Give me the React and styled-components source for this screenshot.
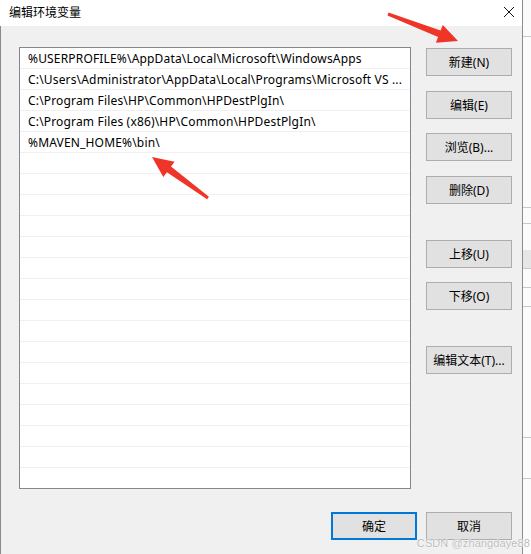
import React from "react";
import styled, { createGlobalStyle } from "styled-components";

const GlobalStyle = createGlobalStyle`
  html, body {
    margin: 0;
    padding: 0;
    background: #f7f7f7;
  }
  body {
    font-family: "Noto Sans", "Noto Sans CJK SC", sans-serif;
    font-size: 12px;
    color: #000;
  }
`;

const Page = styled.div`
  position: relative;
  display: flex;
  width: 531px;
  height: 554px;
  overflow: hidden;
`;

const Window = styled.div`
  display: flex;
  flex-direction: column;
  width: 523px;
  height: 554px;
  border-right: 1px solid #8c8c8c;
  box-sizing: border-box;
`;

const TitleBar = styled.div`
  display: flex;
  align-items: center;
  justify-content: space-between;
  height: 26px;
  box-sizing: border-box;
  padding: 0 7px 2px 9px;
  background: #fff;
  flex-shrink: 0;
`;

const Title = styled.span`
  font-family: "Noto Sans CJK SC", sans-serif;
  font-size: 12px;
  line-height: 1;
`;

const Body = styled.div`
  flex: 1;
  display: flex;
  flex-direction: column;
  padding: 21px 10px 0 18px;
  background: #f0f0f0;
  border-left: 1px solid #8a8a8a;
`;

const Main = styled.div`
  display: flex;
  align-items: flex-start;
`;

const List = styled.div`
  width: 392px;
  height: 442px;
  box-sizing: border-box;
  border: 1px solid #828790;
  background: #fff;
  overflow: hidden;
`;

const Row = styled.div`
  height: 21px;
  box-sizing: border-box;
  padding: 0 0 0 8px;
  border-bottom: 1px solid #f0f0f0;
  display: flex;
  align-items: center;
  white-space: nowrap;
  overflow: hidden;
  font-family: "Noto Sans", "Noto Sans CJK SC", sans-serif;
  font-size: 12px;
  letter-spacing: 0.17px;
`;

const Side = styled.div`
  display: flex;
  flex-direction: column;
  margin-left: 15px;
  padding-top: 1px;
`;

const Button = styled.button`
  width: 86px;
  height: 28px;
  margin-top: ${(p) => p.$gap || 0}px;
  box-sizing: border-box;
  background: #e1e1e1;
  border: ${(p) => (p.$primary ? "2px solid #0078d7" : "1px solid #adadad")};
  border-radius: 0;
  padding: 0;
  font-family: "Noto Sans", "Noto Sans CJK SC", sans-serif;
  font-size: 12px;
  color: #000;
`;

const Footer = styled.div`
  display: flex;
  justify-content: flex-end;
  gap: 9px;
  margin-top: 23px;
`;

const Strip = styled.div`
  flex: 1;
  display: flex;
  flex-direction: column;
  background: #fbfbfb;
`;

const StripLine = styled.div`
  height: ${(p) => p.$h}px;
  margin-top: ${(p) => p.$top}px;
  background: ${(p) => p.$bg || "#c8c8c8"};
`;

const Overlay = styled.svg`
  position: absolute;
  left: 0;
  top: 0;
  pointer-events: none;
`;

const Watermark = styled.span`
  position: absolute;
  right: 1px;
  bottom: 5px;
  font-family: "Liberation Sans", sans-serif;
  font-size: 11px;
  color: #bcbcbc;
  text-shadow: 0 0 1px #fff, 0 0 1px #fff;
  letter-spacing: 0.1px;
`;

const entries = [
  "%USERPROFILE%\\AppData\\Local\\Microsoft\\WindowsApps",
  "C:\\Users\\Administrator\\AppData\\Local\\Programs\\Microsoft VS ...",
  "C:\\Program Files\\HP\\Common\\HPDestPlgIn\\",
  "C:\\Program Files (x86)\\HP\\Common\\HPDestPlgIn\\",
  "%MAVEN_HOME%\\bin\\",
];

const sideButtons = [
  { label: "新建(N)", gap: 0 },
  { label: "编辑(E)", gap: 15 },
  { label: "浏览(B)...", gap: 14 },
  { label: "删除(D)", gap: 15 },
  { label: "上移(U)", gap: 36 },
  { label: "下移(O)", gap: 14 },
  { label: "编辑文本(T)...", gap: 36 },
];

// tapered annotation arrow: thin tail, wide shaft near head, triangular head
function arrowPoints(tail, tip, tailW, shaftW, headLen, headW) {
  const [x1, y1] = tail;
  const [x2, y2] = tip;
  const len = Math.hypot(x2 - x1, y2 - y1);
  const ux = (x2 - x1) / len;
  const uy = (y2 - y1) / len;
  const nx = -uy;
  const ny = ux;
  const bx = x2 - ux * headLen;
  const by = y2 - uy * headLen;
  const p = (x, y, w) => [x + nx * w, y + ny * w];
  const pts = [
    p(x1, y1, tailW / 2),
    p(bx, by, shaftW / 2),
    p(bx, by, headW / 2),
    [x2, y2],
    p(bx, by, -headW / 2),
    p(bx, by, -shaftW / 2),
    p(x1, y1, -tailW / 2),
  ];
  return pts.map(([x, y]) => `${x.toFixed(1)},${y.toFixed(1)}`).join(" ");
}

export default function App() {
  const rows = Array.from({ length: 21 }, (_, i) => entries[i] || "");
  return (
    <>
      <GlobalStyle />
      <Page>
        <Window>
          <TitleBar>
            <Title>编辑环境变量</Title>
            <svg width="12" height="12" viewBox="0 0 12 12">
              <path d="M1 1 L11 11 M11 1 L1 11" stroke="#111" strokeWidth="1" />
            </svg>
          </TitleBar>
          <Body>
            <Main>
              <List>
                {rows.map((text, i) => (
                  <Row key={i}>{text}</Row>
                ))}
              </List>
              <Side>
                {sideButtons.map((b) => (
                  <Button key={b.label} $gap={b.gap}>
                    {b.label}
                  </Button>
                ))}
              </Side>
            </Main>
            <Footer>
              <Button $primary>确定</Button>
              <Button>取消</Button>
            </Footer>
          </Body>
        </Window>
        <Strip>
          <StripLine $top={36} $h={1} />
          <StripLine $top={170} $h={1} />
          <StripLine $top={15} $h={1} />
          <StripLine $top={26} $h={18} $bg="#e6e6e6" />
          <StripLine $top={0} $h={1} />
          <StripLine $top={18} $h={1} />
          <StripLine $top={18} $h={1} />
          <StripLine $top={130} $h={1} />
          <StripLine $top={40} $h={1} />
        </Strip>
        <Overlay width="531" height="554">
          <polygon
            points={arrowPoints([388, 14], [458, 41], 3, 7, 20, 19)}
            fill="#ee3528"
          />
          <polygon
            points={arrowPoints([208, 198], [152, 157], 3, 7, 21, 19)}
            fill="#ee3528"
          />
        </Overlay>
        <Watermark>CSDN @zhangdaye88</Watermark>
      </Page>
    </>
  );
}
